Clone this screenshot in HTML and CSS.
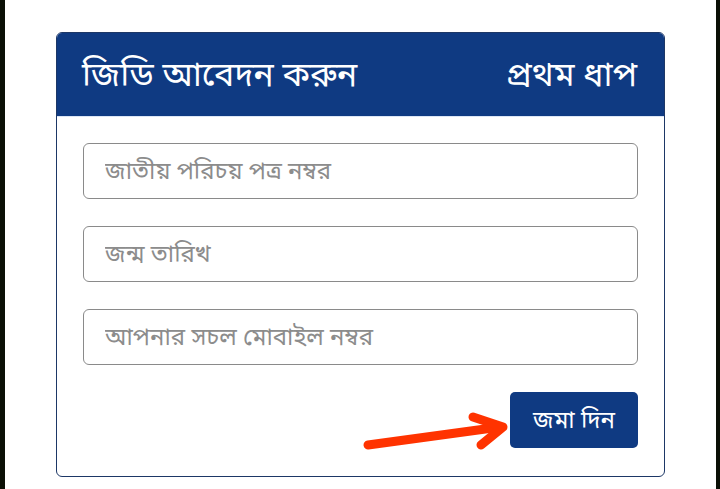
FILE: index.html
```html
<!DOCTYPE html>
<html lang="bn">
<head>
  <meta charset="UTF-8">
  <meta name="viewport" content="width=device-width, initial-scale=1.0">
  <title>জিডি আবেদন</title>
  <link rel="stylesheet" href="styles.css">
</head>
<body>
  <div class="page">
    <!-- GD form card -->
    <div class="card">
      <div class="card-header">
        <h1>জিডি আবেদন করুন</h1>
        <span class="step">প্রথম ধাপ</span>
      </div>
      <form class="card-body" onsubmit="return false">
        <input type="text" placeholder="জাতীয় পরিচয় পত্র নম্বর">
        <input type="text" placeholder="জন্ম তারিখ">
        <input type="text" placeholder="আপনার সচল মোবাইল নম্বর">
        <div class="actions">
          <button type="submit">জমা দিন</button>
        </div>
      </form>
    </div>

    <!-- red pointer arrow -->
    <svg class="pointer" width="150" height="50" viewBox="0 0 150 50">
      <g fill="none" stroke="#ff3300" stroke-width="9" stroke-linecap="round" stroke-linejoin="round">
        <line x1="6" y1="41" x2="138" y2="23"/>
        <polyline points="111,13 141,23 119,41"/>
      </g>
    </svg>
  </div>
</body>
</html>
```

FILE: styles.css
```css
* {
  box-sizing: border-box;
}
body {
  margin: 0;
  background: #0b1006;
  font-family: "Noto Sans Bengali", "Noto Sans", sans-serif;
}
.page {
  position: relative;
  width: 711px;
  height: 489px;
  margin-left: 5px;
  background: #fff;
  padding: 32px 51px 0;
}
.card {
  border: 1px solid #1d3766;
  border-radius: 6px;
  overflow: hidden;
  height: 445px;
}
.card-header {
  background: #0f3a82;
  height: 84px;
  padding: 5px 27px 0 25px;
  display: flex;
  align-items: center;
  justify-content: space-between;
  color: #fff;
  border-bottom: 1px solid #dce6f5;
}
.card-header h1 {
  margin: 0;
  font-size: 34px;
  font-weight: normal;
}
.step {
  font-size: 34px;
}
.card-body {
  padding: 26px 26px 0;
  display: flex;
  flex-direction: column;
  gap: 27px;
}
input {
  height: 56px;
  border: 1px solid #8a8a8a;
  border-radius: 6px;
  padding: 4px 21px 0;
  font-family: inherit;
  font-size: 24px;
}
input::placeholder {
  color: #8c8c8c;
}
.actions {
  display: flex;
  justify-content: flex-end;
}
button {
  width: 128px;
  height: 56px;
  border: none;
  border-radius: 5px;
  padding-top: 5px;
  background: #0f3a82;
  color: #fff;
  font-family: inherit;
  font-size: 24px;
}
.pointer {
  position: absolute;
  left: 357px;
  top: 404px;
}
```
